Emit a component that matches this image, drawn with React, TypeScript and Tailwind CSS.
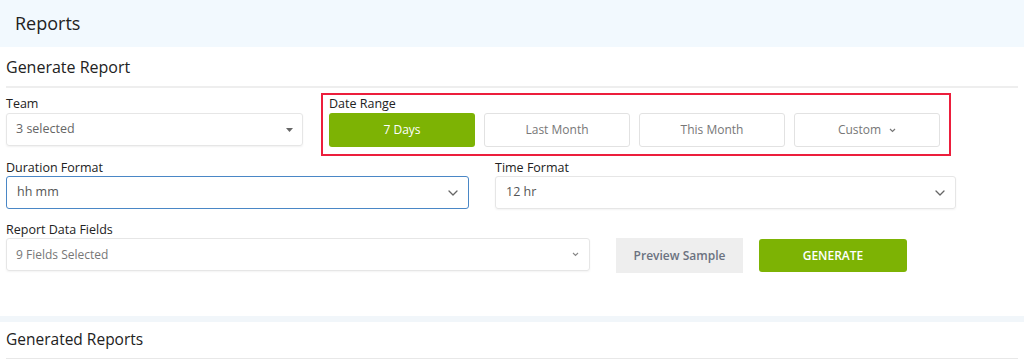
import React from "react";

const Chevron = ({ className = "" }: { className?: string }) => (
  <svg className={className} width="10" height="6" viewBox="0 0 10 6" fill="none">
    <path d="M1 1l4 4 4-4" stroke="#666" strokeWidth="1.3" strokeLinecap="round" strokeLinejoin="round" />
  </svg>
);

const Caret = () => (
  <svg width="7" height="4" viewBox="0 0 7 4">
    <path d="M0 0h7L3.5 4z" fill="#666" />
  </svg>
);

export default function App() {
  return (
    <div className="w-[1024px] h-[361px] overflow-hidden bg-white text-[#222]" style={{ fontFamily: "'Open Sans', 'Noto Sans', sans-serif" }}>
      <div className="h-[47px] bg-[#f2f9fe] pl-[15px] flex items-center text-[18px] text-[#222]">Reports</div>
      <div className="px-[6px]">
        <div className="h-[41px] flex items-center text-[16px] text-[#222] border-b-2 border-[#eeeeee]">Generate Report</div>
        <div className="flex pt-[5px]">
          <div className="w-[297px] pt-[3px]">
            <div className="text-[12.5px] leading-[16px] text-[#222]">Team</div>
            <div className="mt-[1px] h-[33px] border border-[#e6e6e6] rounded-[3px] shadow-[0_1px_2px_rgba(0,0,0,0.06)] flex items-center justify-between pl-[9px] pr-[9px] text-[12.5px] text-[#666]">
              <span>3 selected</span>
              <Caret />
            </div>
          </div>
          <div className="ml-[18px] w-[630px] h-[63px] border-2 border-[#ec1e3c] px-[6px] pt-[1px]">
            <div className="text-[12.5px] leading-[16px] text-[#222]">Date Range</div>
            <div className="flex gap-[9px] mt-[1px]">
              <div className="w-[146px] h-[34px] rounded-[3px] bg-[#7db304] text-white text-[12px] flex items-center justify-center">7 Days</div>
              <div className="w-[146px] h-[34px] rounded-[3px] border border-[#e2e2e2] text-[#777] text-[12px] flex items-center justify-center">Last Month</div>
              <div className="w-[146px] h-[34px] rounded-[3px] border border-[#e2e2e2] text-[#777] text-[12px] flex items-center justify-center">This Month</div>
              <div className="w-[146px] h-[34px] rounded-[3px] border border-[#e2e2e2] text-[#777] text-[12px] flex items-center justify-center gap-[8px]">
                <span>Custom</span>
                <svg width="7" height="5" viewBox="0 0 7 5" fill="none"><path d="M1 1l2.5 2.5L6 1" stroke="#777" strokeWidth="1.2" /></svg>
              </div>
            </div>
          </div>
        </div>
        <div className="flex gap-[26px] pt-[4px]">
          <div className="w-[463px]">
            <div className="text-[12.5px] leading-[16px] text-[#222]">Duration Format</div>
            <div className="h-[33px] border-[1.5px] border-[#4a87c6] rounded-[3px] flex items-center justify-between pl-[10px] pr-[10px] text-[12.5px] text-[#555]">
              <span>hh mm</span>
              <Chevron />
            </div>
          </div>
          <div className="w-[461px]">
            <div className="text-[12.5px] leading-[16px] text-[#222]">Time Format</div>
            <div className="h-[33px] border border-[#e6e6e6] rounded-[3px] shadow-[0_1px_2px_rgba(0,0,0,0.05)] flex items-center justify-between pl-[10px] pr-[10px] text-[12.5px] text-[#555]">
              <span>12 hr</span>
              <Chevron />
            </div>
          </div>
        </div>
        <div className="flex items-end pt-[13px]">
          <div className="w-[584px]">
            <div className="text-[12.5px] leading-[16px] text-[#222]">Report Data Fields</div>
            <div className="h-[33px] border border-[#e6e6e6] rounded-[3px] shadow-[0_1px_2px_rgba(0,0,0,0.05)] flex items-center justify-between pl-[9px] pr-[10px] text-[12px] text-[#777]">
              <span>9 Fields Selected</span>
              <svg width="7" height="5" viewBox="0 0 7 5" fill="none"><path d="M1 1l2.5 2.5L6 1" stroke="#888" strokeWidth="1.1" /></svg>
            </div>
          </div>
          <div className="ml-[26px] w-[127px] h-[35px] bg-[#eeeeee] flex items-center justify-center text-[12px] font-semibold text-[#6b7280] mb-[-2px]">Preview Sample</div>
          <div className="ml-[16px] w-[148px] h-[33px] rounded-[3px] bg-[#7db304] flex items-center justify-center text-[12px] font-semibold text-white mb-[-1px]">GENERATE</div>
        </div>
      </div>
      <div className="mt-[45px] h-[6px] bg-[#f1f6fa]" />
      <div className="px-[6px]">
        <div className="h-[37px] flex items-center text-[15.5px] text-[#222] border-b border-[#e8e8e8]">Generated Reports</div>
      </div>
    </div>
  );
}
